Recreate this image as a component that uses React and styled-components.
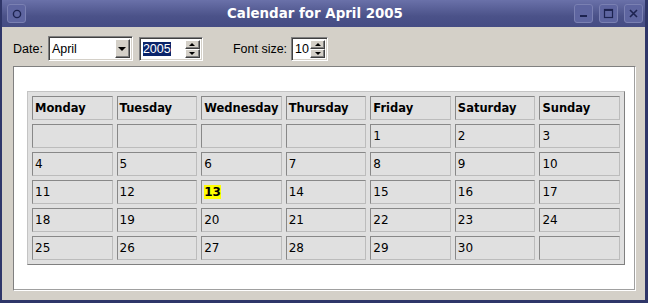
import React from "react";
import styled, { createGlobalStyle } from "styled-components";

const GlobalStyle = createGlobalStyle`
  html, body {
    margin: 0;
    padding: 0;
    background: #d4d0c8;
  }
  body {
    font-family: "DejaVu Sans", Verdana, sans-serif;
    font-size: 12px;
    color: #000;
  }
`;

const Window = styled.div`
  width: 648px;
  height: 303px;
  box-sizing: border-box;
  display: flex;
  flex-direction: column;
  border-left: 2px solid #2f3669;
  border-right: 3px solid #2f3669;
  border-bottom: 3px solid #2f3669;
  background: #d4d0c8;
`;

const TitleBar = styled.div`
  height: 27px;
  flex: none;
  display: flex;
  align-items: center;
  padding: 0 2px 0 5px;
  background: linear-gradient(#6a71a9, #4b5289 60%, #454c84);
`;

const Title = styled.div`
  flex: 1;
  text-align: center;
  color: #fff;
  font-weight: bold;
  font-size: 13.4px;
  padding-left: 30px;
`;

const TitleButton = styled.div`
  width: 19px;
  height: 19px;
  margin-left: ${(p) => p.$gap || 0}px;
  box-sizing: border-box;
  border: 1px solid #7a80b2;
  border-radius: 3px;
  background: #5e65a0;
  display: flex;
  align-items: center;
  justify-content: center;
  color: #1d2350;
`;

const Client = styled.div`
  flex: 1;
  display: flex;
  flex-direction: column;
  padding: 9px 9px 9px 11px;
`;

const Toolbar = styled.div`
  display: flex;
  align-items: center;
  height: 25px;
  margin-bottom: 5px;
  font-family: "Liberation Sans", Arial, sans-serif;
  font-size: 12.5px;
`;

const Label = styled.span`
  margin-left: ${(p) => p.$gap || 0}px;
  margin-right: ${(p) => p.$right || 4}px;
`;

const Sunken = styled.div`
  box-sizing: border-box;
  height: ${(p) => p.$h || 24}px;
  width: ${(p) => p.$w}px;
  margin-left: ${(p) => p.$gap || 0}px;
  display: flex;
  align-items: center;
  background: #fff;
  border-top: 1px solid #808080;
  border-left: 1px solid #808080;
  border-right: 1px solid #fff;
  border-bottom: 1px solid #fff;
  box-shadow: inset 1px 1px 0 #404040, inset -1px -1px 0 #d4d0c8;
  padding: 2px;
`;

const FieldText = styled.div`
  flex: 1;
  padding-left: 1px;
  white-space: nowrap;
`;

const Selected = styled.span`
  background: #0a246a;
  color: #fff;
`;

const RaisedButton = styled.div`
  box-sizing: border-box;
  width: ${(p) => p.$w || 15}px;
  height: ${(p) => p.$h || 17}px;
  background: #d4d0c8;
  border-top: 1px solid #fff;
  border-left: 1px solid #fff;
  border-right: 1px solid #404040;
  border-bottom: 1px solid #404040;
  box-shadow: inset -1px -1px 0 #808080;
  display: flex;
  align-items: center;
  justify-content: center;
`;

const SpinColumn = styled.div`
  display: flex;
  flex-direction: column;
  align-self: stretch;
`;

const Arrow = styled.div`
  width: 0;
  height: 0;
  border-left: ${(p) => p.$s}px solid transparent;
  border-right: ${(p) => p.$s}px solid transparent;
  ${(p) => (p.$up ? "border-bottom" : "border-top")}: ${(p) => p.$s}px solid #000;
`;

const Frame = styled.div`
  flex: 1;
  width: 623px;
  box-sizing: border-box;
  background: #fff;
  border-top: 1px solid #808080;
  border-left: 1px solid #808080;
  border-right: 1px solid #fff;
  border-bottom: 1px solid #fff;
  box-shadow: inset -1px -1px 0 #a0a0a0;
  padding: 24px 0 0 13px;
`;

const Calendar = styled.div`
  width: 598px;
  box-sizing: border-box;
  display: grid;
  grid-template-columns: repeat(7, 1fr);
  grid-auto-rows: 24px;
  gap: 4px;
  padding: 4px;
  background: #e0e0e0;
  border-top: 1px solid #c4c4c4;
  border-left: 1px solid #c4c4c4;
  border-right: 1px solid #808080;
  border-bottom: 1px solid #808080;
`;

const Cell = styled.div`
  box-sizing: border-box;
  background: #e0e0e0;
  border-top: 1px solid #888;
  border-left: 1px solid #888;
  border-right: 1px solid #bcbcbc;
  border-bottom: 1px solid #bcbcbc;
  display: flex;
  align-items: center;
  padding-left: 2px;
  font-size: ${(p) => (p.$head ? "11.5px" : "12px")};
  font-weight: ${(p) => (p.$head ? "bold" : "normal")};
  white-space: nowrap;
  overflow: hidden;
`;

const Today = styled.span`
  background: #ffff00;
  font-weight: bold;
`;

const days = ["Monday", "Tuesday", "Wednesday", "Thursday", "Friday", "Saturday", "Sunday"];

function buildCells() {
  const cells = [];
  for (let i = 0; i < 4; i++) cells.push(null);
  for (let d = 1; d <= 30; d++) cells.push(d);
  while (cells.length < 35) cells.push(null);
  return cells;
}

function Spin({ w, h, gap, children }) {
  return (
    <Sunken $w={w} $h={h} $gap={gap}>
      <FieldText>{children}</FieldText>
      <SpinColumn>
        <RaisedButton $w={15} $h={10}>
          <Arrow $up $s={3} />
        </RaisedButton>
        <RaisedButton $w={15} $h={10}>
          <Arrow $s={3} />
        </RaisedButton>
      </SpinColumn>
    </Sunken>
  );
}

export default function App() {
  const cells = buildCells();
  return (
    <>
      <GlobalStyle />
      <Window>
        <TitleBar>
          <TitleButton>
            <svg width="10" height="10" viewBox="0 0 10 10">
              <circle cx="5" cy="5" r="3.6" fill="none" stroke="#1d2350" strokeWidth="1.4" />
            </svg>
          </TitleButton>
          <Title>Calendar for April 2005</Title>
          <TitleButton>
            <svg width="11" height="11" viewBox="0 0 11 11">
              <rect x="2" y="7" width="7" height="2" fill="#1d2350" />
            </svg>
          </TitleButton>
          <TitleButton $gap={6}>
            <svg width="11" height="11" viewBox="0 0 11 11">
              <rect x="1.5" y="1.5" width="8" height="8" fill="none" stroke="#1d2350" strokeWidth="1.2" />
              <rect x="1.5" y="1.5" width="8" height="1.5" fill="#1d2350" />
            </svg>
          </TitleButton>
          <TitleButton $gap={6}>
            <svg width="11" height="11" viewBox="0 0 11 11">
              <path d="M2 2 L9 9 M9 2 L2 9" stroke="#1d2350" strokeWidth="1.6" />
            </svg>
          </TitleButton>
        </TitleBar>
        <Client>
          <Toolbar>
            <Label $gap={0} $right={5}>Date:</Label>
            <Sunken $w={85} $h={25}>
              <FieldText>April</FieldText>
              <RaisedButton $w={15} $h={19}>
                <Arrow $s={4} />
              </RaisedButton>
            </Sunken>
            <Spin w={64} h={24} gap={6}>
              <Selected>2005</Selected>
            </Spin>
            <Label $gap={30}>Font size:</Label>
            <Spin w={37} h={24}>10</Spin>
          </Toolbar>
          <Frame>
            <Calendar>
              {days.map((d) => (
                <Cell key={d} $head>
                  {d}
                </Cell>
              ))}
              {cells.map((d, i) => (
                <Cell key={i}>{d === 13 ? <Today>13</Today> : d}</Cell>
              ))}
            </Calendar>
          </Frame>
        </Client>
      </Window>
    </>
  );
}
